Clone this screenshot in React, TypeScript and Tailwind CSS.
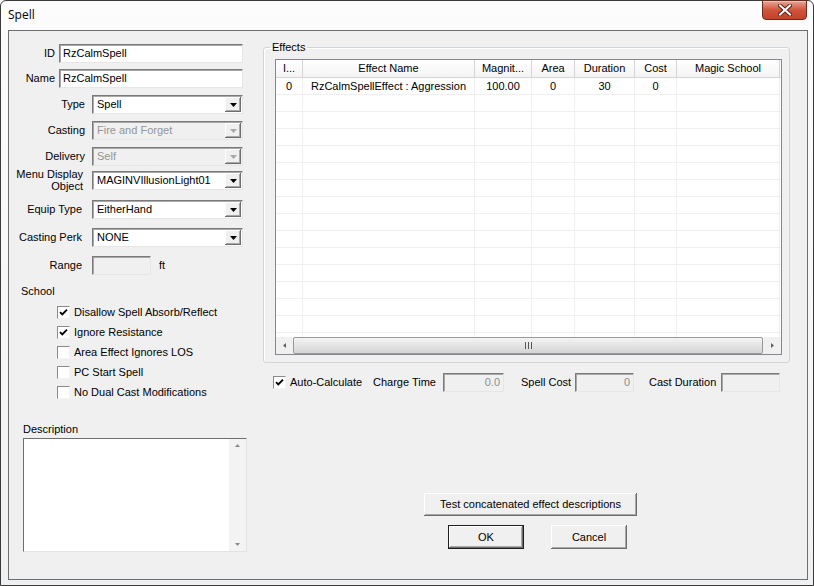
import type { ReactNode } from "react";

const sunken =
  "border border-t-[#7a7a7a] border-l-[#7a7a7a] border-r-[#e6e6e6] border-b-[#e6e6e6] shadow-[inset_1px_1px_#a8a8a8]";
const raised =
  "bg-[#f0f0f0] shadow-[inset_-1px_-1px_#6d6d6d,inset_1px_1px_#ffffff,inset_-2px_-2px_#a8a8a8]";

function TextBox({ value, w, disabled, right }: { value?: string; w: number; disabled?: boolean; right?: boolean }) {
  return (
    <div
      className={`${sunken} h-[19px] flex items-center px-[3px] ${disabled ? "bg-[#f0f0f0] text-[#8d8d8d]" : "bg-white"} ${right ? "justify-end" : ""}`}
      style={{ width: w }}
    >
      {value}
    </div>
  );
}

function Combo({ value, disabled }: { value: string; disabled?: boolean }) {
  return (
    <div className={`${sunken} w-[151px] h-[19px] flex items-center pl-[4px] pr-[1px] ${disabled ? "bg-[#f0f0f0] text-[#959595]" : "bg-white"}`}>
      <span className="flex-1">{value}</span>
      <div className={`${raised} w-[16px] h-[15px] flex items-center justify-center`}>
        <svg width="7" height="4" viewBox="0 0 7 4">
          <path d="M0 0h7L3.5 4z" fill={disabled ? "#a8a8a8" : "#000"} />
        </svg>
      </div>
    </div>
  );
}

function Check({ checked, label }: { checked?: boolean; label: string }) {
  return (
    <div className="flex items-center h-[13px]">
      <div className="w-[13px] h-[13px] bg-white border border-t-[#8a8a8a] border-l-[#8a8a8a] border-r-[#f3f3f3] border-b-[#f3f3f3] flex items-center justify-center">
        {checked && (
          <svg width="9" height="9" viewBox="0 0 9 9">
            <path d="M1 4.2 L3.3 6.5 L8 1.6" stroke="#000" strokeWidth="1.9" fill="none" />
          </svg>
        )}
      </div>
      <span className="ml-[4px]">{label}</span>
    </div>
  );
}

function Button({ children, w, h, isDefault }: { children: ReactNode; w: number; h: number; isDefault?: boolean }) {
  return (
    <div
      className={`${raised} flex items-center justify-center ${isDefault ? "border border-[#1e1e1e]" : ""}`}
      style={{ width: w, height: h }}
    >
      {children}
    </div>
  );
}

function Row({ label, lw, top, children }: { label: ReactNode; lw: number; top: number; children: ReactNode }) {
  return (
    <div className="flex items-center h-[19px]" style={{ marginTop: top }}>
      <div className="text-right shrink-0" style={{ width: lw }}>
        {label}
      </div>
      {children}
    </div>
  );
}

const cols = [
  { name: "I...", w: 27 },
  { name: "Effect Name", w: 172 },
  { name: "Magnit...", w: 57 },
  { name: "Area", w: 43 },
  { name: "Duration", w: 60 },
  { name: "Cost", w: 42 },
  { name: "Magic School", w: 103 },
];
const rowData = ["0", "RzCalmSpellEffect : Aggression", "100.00", "0", "30", "0", ""];

function EffectsTable() {
  return (
    <div className="w-[507px] h-[296px] border border-[#828790] bg-white flex flex-col">
      <div className="flex h-[18px] shrink-0 border-b border-[#d5d5d5] bg-gradient-to-b from-white to-[#f4f4f4]">
        {cols.map((c) => (
          <div key={c.name} className="flex items-center justify-center border-r border-[#d5d5d5] shrink-0" style={{ width: c.w }}>
            {c.name}
          </div>
        ))}
      </div>
      <div className="flex-1 overflow-hidden">
        {Array.from({ length: 16 }).map((_, r) => (
          <div key={r} className="flex h-[17px] border-b border-[#f0f0f0]">
            {cols.map((c, i) => (
              <div key={c.name} className="flex items-center justify-center border-r border-[#f0f0f0] shrink-0" style={{ width: c.w }}>
                {r === 0 ? rowData[i] : ""}
              </div>
            ))}
          </div>
        ))}
      </div>
      {/* horizontal scrollbar */}
      <div className="h-[17px] shrink-0 flex bg-[#f0f0f0]">
        <div className="w-[17px] flex items-center justify-center">
          <svg width="3" height="5" viewBox="0 0 3 5">
            <path d="M3 0v5L0 2.5z" fill="#606060" />
          </svg>
        </div>
        <div className="flex-1 border border-[#9a9a9a] rounded-[2px] bg-gradient-to-b from-[#f4f4f4] to-[#d4d4d4] flex items-center justify-center">
          <div className="flex gap-[2px]">
            <div className="w-px h-[7px] bg-[#555]" />
            <div className="w-px h-[7px] bg-[#555]" />
            <div className="w-px h-[7px] bg-[#555]" />
          </div>
        </div>
        <div className="w-[18px] flex items-center justify-center">
          <svg width="3" height="5" viewBox="0 0 3 5">
            <path d="M0 0v5L3 2.5z" fill="#606060" />
          </svg>
        </div>
      </div>
    </div>
  );
}

export default function App() {
  return (
    <div className="w-[814px] h-[586px] bg-white font-['Liberation_Sans',Arial,sans-serif] text-[11px] text-black leading-[13px]">
      <div className="w-full h-full flex flex-col border border-[#3a3a3a] rounded-t-[6px] bg-gradient-to-b from-[#fcfcfc] via-[#f6f7f8] to-[#eef0f2]">
        {/* Title bar */}
        <div className="h-[29px] shrink-0 flex items-start justify-between pl-[7px] pr-[6px]">
          <span className="mt-[7px] text-[12px] leading-[14px] font-['Open_Sans',sans-serif]">Spell</span>
          <div className="w-[45px] h-[20px] -mt-px rounded-b-[4px] border border-[#6b2a1f] bg-gradient-to-b from-[#e9a597] via-[#d0533b] to-[#c64129] flex items-center justify-center shadow-[inset_0_1px_#f2c3b8]">
            <svg width="14" height="12" viewBox="0 0 14 12">
              <path d="M2 1.5 L12 10.5 M12 1.5 L2 10.5" stroke="#5a2018" strokeWidth="4" strokeLinecap="square" />
              <path d="M2 1.5 L12 10.5 M12 1.5 L2 10.5" stroke="#ffffff" strokeWidth="2" strokeLinecap="square" />
            </svg>
          </div>
        </div>

        {/* Client area */}
        <div className="flex-1 ml-[7px] mr-[5px] mb-[5px] border border-[#6e6e6e] bg-[#f0f0f0] flex">
          {/* Left column */}
          <div className="w-[254px] shrink-0 flex flex-col">
            <Row label="ID" lw={46} top={13}>
              <div className="ml-[4px]">
                <TextBox value="RzCalmSpell" w={184} />
              </div>
            </Row>
            <Row label="Name" lw={46} top={6}>
              <div className="ml-[4px]">
                <TextBox value="RzCalmSpell" w={184} />
              </div>
            </Row>
            <Row label="Type" lw={76} top={7}>
              <div className="ml-[7px]">
                <Combo value="Spell" />
              </div>
            </Row>
            <Row label="Casting" lw={76} top={7}>
              <div className="ml-[7px]">
                <Combo value="Fire and Forget" disabled />
              </div>
            </Row>
            <Row label="Delivery" lw={76} top={7}>
              <div className="ml-[7px]">
                <Combo value="Self" disabled />
              </div>
            </Row>
            <Row
              label={
                <span className="block pr-[2px] leading-[12px] -mt-[2px]">
                  Menu Display
                  <br />
                  Object
                </span>
              }
              lw={76}
              top={5}
            >
              <div className="ml-[7px]">
                <Combo value="MAGINVIllusionLight01" />
              </div>
            </Row>
            <Row label={<span className="pr-[3px]">Equip Type</span>} lw={76} top={10}>
              <div className="ml-[7px]">
                <Combo value="EitherHand" />
              </div>
            </Row>
            <Row label={<span className="pr-[3px]">Casting Perk</span>} lw={76} top={9}>
              <div className="ml-[7px]">
                <Combo value="NONE" />
              </div>
            </Row>
            <Row label={<span className="pr-[3px]">Range</span>} lw={76} top={9}>
              <div className="ml-[7px]">
                <TextBox w={59} disabled />
              </div>
              <span className="ml-[8px]">ft</span>
            </Row>
            <div className="ml-[12px] mt-[10px]">School</div>
            <div className="ml-[48px] mt-[8px] flex flex-col gap-[7px]">
              <Check checked label="Disallow Spell Absorb/Reflect" />
              <Check checked label="Ignore Resistance" />
              <Check label="Area Effect Ignores LOS" />
              <Check label="PC Start Spell" />
              <Check label="No Dual Cast Modifications" />
            </div>
            <div className="ml-[14px] mt-[24px]">Description</div>
            <div className="ml-[14px] mt-[2px] w-[224px] h-[114px] bg-white border border-t-[#6e6e6e] border-l-[#6e6e6e] border-r-[#e3e3e3] border-b-[#e3e3e3] flex justify-end">
              <div className="w-[17px] h-full bg-[#f3f3f3] flex flex-col justify-between items-center py-[5px]">
                <svg width="5" height="3" viewBox="0 0 5 3">
                  <path d="M0 3h5L2.5 0z" fill="#8a8a8a" />
                </svg>
                <svg width="5" height="3" viewBox="0 0 5 3">
                  <path d="M0 0h5L2.5 3z" fill="#8a8a8a" />
                </svg>
              </div>
            </div>
          </div>

          {/* Right column */}
          <div className="flex-1 flex flex-col">
            <fieldset className="mt-[10px] w-[527px] border border-[#d0d5d9] rounded-[3px] pl-[11px] pb-[7px] pt-[5px] shadow-[inset_1px_1px_#ffffff]">
              <legend className="-ml-[5px] px-[2px]">Effects</legend>
              <EffectsTable />
            </fieldset>

            <div className="mt-[10px] flex items-center h-[19px] pl-[10px]">
              <div className="w-[100px] shrink-0">
                <Check checked label="Auto-Calculate" />
              </div>
              <div className="w-[70px] shrink-0">Charge Time</div>
              <TextBox value="0.0" w={61} disabled right />
              <div className="w-[17px]" />
              <div className="w-[54px] shrink-0">Spell Cost</div>
              <TextBox value="0" w={59} disabled right />
              <div className="w-[15px]" />
              <div className="w-[72px] shrink-0">Cast Duration</div>
              <TextBox w={59} disabled />
            </div>

            <div className="mt-[101px] ml-[161px]">
              <Button w={213} h={23}>
                Test concatenated effect descriptions
              </Button>
            </div>
            <div className="mt-[9px] ml-[185px] flex gap-[27px]">
              <Button w={76} h={24} isDefault>
                OK
              </Button>
              <Button w={76} h={24}>
                Cancel
              </Button>
            </div>
          </div>
        </div>
      </div>
    </div>
  );
}
